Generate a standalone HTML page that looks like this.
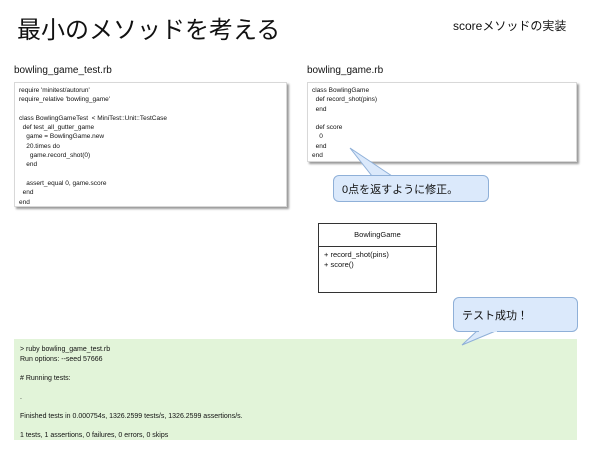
<!DOCTYPE html>
<html><head><meta charset="utf-8"><style>
body{margin:0;width:600px;height:455px;background:#fff;position:relative;overflow:hidden;font-family:"Liberation Sans","Noto Sans CJK JP",sans-serif;color:#111}
.a{position:absolute}
.code{position:absolute;background:#fff;border:1px solid #d8d8d8;box-shadow:2px 2px 2px #999;font-size:6.5px;line-height:9.3px;white-space:pre;padding:3px 4px;box-sizing:border-box}
.bub{position:absolute;background:#dbe9fb;border:1px solid #8fb0d8;border-radius:6px;font-size:11px;box-sizing:border-box}
</style></head><body>
<div class="a" style="left:17px;top:10px;font-size:24px;">最小のメソッドを考える</div>
<div class="a" style="left:453px;top:17px;font-size:12px;">scoreメソッドの実装</div>
<div class="a" style="left:14px;top:65px;font-size:10px;">bowling_game_test.rb</div>
<div class="a" style="left:307px;top:65px;font-size:10px;">bowling_game.rb</div>
<div class="code" style="left:14px;top:82px;width:273px;height:125px;">require 'minitest/autorun'
require_relative 'bowling_game'

class BowlingGameTest  &lt; MiniTest::Unit::TestCase
  def test_all_gutter_game
    game = BowlingGame.new
    20.times do
      game.record_shot(0)
    end

    assert_equal 0, game.score
  end
end</div>
<div class="code" style="left:307px;top:82px;width:270px;height:80px;">class BowlingGame
  def record_shot(pins)
  end

  def score
    0
  end
end</div>
<svg class="a" style="left:0;top:0" width="600" height="455">
<path d="M350 148 L392 176 L372 176 Z" fill="#dbe9fb" stroke="#8fb0d8"/>
</svg>
<div class="bub" style="left:333px;top:175px;width:156px;height:27px;padding:5px 0 0 8px;">0点を返すように修正。</div>
<div class="a" style="left:318px;top:223px;width:119px;height:70px;border:1px solid #333;box-sizing:border-box;font-size:7.5px;">
<div style="height:22px;border-bottom:1px solid #333;text-align:center;line-height:22px;">BowlingGame</div>
<div style="padding:3px 5px;line-height:10px;">+ record_shot(pins)<br>+ score()</div></div>
<div class="a" style="left:14px;top:339px;width:563px;height:101px;background:#e2f4d9;"></div>
<svg class="a" style="left:0;top:0" width="600" height="455">
<path d="M462 345 L478 330 L498 330 Z" fill="#dbe9fb" stroke="#8fb0d8"/>
</svg>
<div class="bub" style="left:453px;top:297px;width:125px;height:35px;padding:9px 0 0 8px;">テスト成功！</div>
<svg class="a" style="left:0;top:0" width="600" height="455"><path d="M479 331 L497 331" stroke="#dbe9fb" stroke-width="2"/></svg>
<div class="a" style="left:20px;top:345px;font-size:7px;line-height:9.5px;white-space:pre;">&gt; ruby bowling_game_test.rb
Run options: --seed 57666

# Running tests:

.

Finished tests in 0.000754s, 1326.2599 tests/s, 1326.2599 assertions/s.

1 tests, 1 assertions, 0 failures, 0 errors, 0 skips</div>
</body></html>
